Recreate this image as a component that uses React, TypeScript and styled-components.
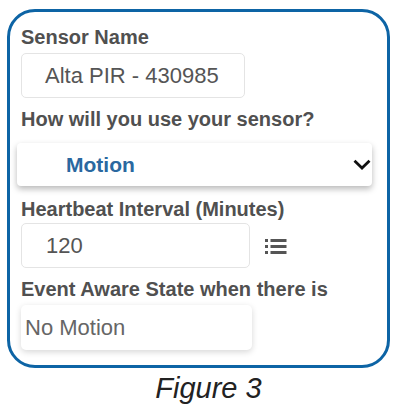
import styled, { createGlobalStyle } from "styled-components";

const GlobalStyle = createGlobalStyle`
  html, body {
    margin: 0;
    padding: 0;
    background: #ffffff;
  }
  body {
    font-family: "Liberation Sans", Arial, sans-serif;
  }
`;

const Page = styled.div`
  width: 411px;
  height: 411px;
  padding-top: 9px;
  box-sizing: border-box;
  overflow: hidden;
`;

const Card = styled.div`
  margin-left: 7px;
  width: 383px;
  box-sizing: border-box;
  border: 3px solid #0d64a5;
  border-radius: 28px;
  padding: 14px 15px 15px 7px;
  display: flex;
  flex-direction: column;
`;

const Label = styled.div<{ $marginTop?: number }>`
  margin: ${({ $marginTop }) => $marginTop ?? 0}px 0 0 4px;
  font-size: 20px;
  line-height: 23px;
  font-weight: 700;
  color: #505050;
  white-space: nowrap;
`;

const TextBox = styled.div<{ $width: number; $padLeft: number; $marginTop: number; $shadow?: boolean }>`
  margin: ${({ $marginTop }) => $marginTop}px 0 0 4px;
  width: ${({ $width }) => $width}px;
  height: 45px;
  box-sizing: border-box;
  padding-left: ${({ $padLeft }) => $padLeft}px;
  display: flex;
  align-items: center;
  border-radius: 5px;
  border: ${({ $shadow }) => ($shadow ? "none" : "1px solid #e4e4e4")};
  box-shadow: ${({ $shadow }) => ($shadow ? "0 2px 6px rgba(0, 0, 0, 0.16)" : "none")};
  font-size: 22px;
  color: ${({ $shadow }) => ($shadow ? "#666666" : "#555555")};
  white-space: nowrap;
`;

const Select = styled.div`
  margin-top: 12px;
  height: 43px;
  box-sizing: border-box;
  padding: 0 1px 0 49px;
  display: flex;
  align-items: center;
  justify-content: space-between;
  border-radius: 4px;
  box-shadow: 0 3px 6px rgba(0, 0, 0, 0.28);
  background: #ffffff;
`;

const SelectValue = styled.span`
  font-size: 21px;
  font-weight: 700;
  color: #2a68a0;
`;

const FieldRow = styled.div`
  display: flex;
  align-items: center;
  gap: 15px;
  margin-top: 2px;

  & > ${TextBox} {
    margin-top: 0;
  }
`;

const Caption = styled.div`
  margin-top: 4px;
  padding-left: 6px;
  text-align: center;
  font-size: 29px;
  line-height: 32px;
  font-style: italic;
  color: #222222;
`;

const Chevron = () => (
  <svg width="18" height="11" viewBox="0 0 18 11">
    <polyline points="1.5,1.8 9,9 16.5,1.8" fill="none" stroke="#111" strokeWidth="2.8" />
  </svg>
);

const ListIcon = () => (
  <svg width="22" height="16" viewBox="0 0 22 16" style={{ marginTop: 2 }}>
    {[0, 6, 12].map((y) => (
      <g key={y} fill="#555">
        <rect x="0" y={y} width="3" height="3" />
        <rect x="5.5" y={y} width="16" height="3" />
      </g>
    ))}
  </svg>
);

export default function App() {
  return (
    <>
      <GlobalStyle />
      <Page>
        <Card>
          <Label>Sensor Name</Label>
          <TextBox $width={224} $padLeft={23} $marginTop={4}>
            Alta PIR - 430985
          </TextBox>
          <Label $marginTop={10}>How will you use your sensor?</Label>
          <Select>
            <SelectValue>Motion</SelectValue>
            <Chevron />
          </Select>
          <Label $marginTop={12}>Heartbeat Interval (Minutes)</Label>
          <FieldRow>
            <TextBox $width={229} $padLeft={24} $marginTop={0}>
              120
            </TextBox>
            <ListIcon />
          </FieldRow>
          <Label $marginTop={10}>Event Aware State when there is</Label>
          <TextBox $width={231} $padLeft={4} $marginTop={4} $shadow>
            No Motion
          </TextBox>
        </Card>
        <Caption>Figure 3</Caption>
      </Page>
    </>
  );
}
